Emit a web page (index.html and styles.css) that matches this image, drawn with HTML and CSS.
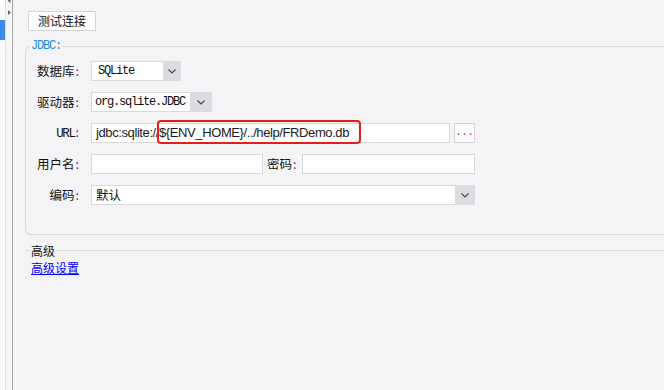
FILE: index.html
```html
<!DOCTYPE html>
<html lang="zh-CN">
<head>
<meta charset="utf-8">
<title>JDBC</title>
<link rel="stylesheet" href="styles.css">
</head>
<body>
<div class="app">
  <div class="strip">
    <div class="strip-sel"><div class="sel-block"></div></div>
    <div class="strip-sep"></div>
    <div class="strip-arrows">
      <svg class="arrows" width="6" height="16" viewBox="0 0 6 16">
        <polygon points="4.5,-2 1.5,0.5 4.5,3" fill="#666"/>
        <polygon points="2,10 5,12.5 2,15" fill="#666"/>
      </svg>
    </div>
    <div class="strip-edge"></div>
  </div>
  <div class="main">
    <button class="btn-test" type="button">测试连接</button>
    <fieldset class="group jdbc">
      <legend class="legend-jdbc">JDBC:</legend>
      <div class="rows">
        <div class="row">
          <span class="label">数据库<span class="colon">:</span></span>
          <div class="combo">
            <span class="combo-field mono w-db">SQLite</span>
            <span class="combo-btn b-db"><svg width="8" height="5" viewBox="0 0 8 5"><polyline points="0.5,0.5 4,4 7.5,0.5" fill="none" stroke="#444" stroke-width="1.1"/></svg></span>
          </div>
        </div>
        <div class="row">
          <span class="label">驱动器<span class="colon">:</span></span>
          <div class="combo">
            <span class="combo-field mono w-drv">org.sqlite.JDBC</span>
            <span class="combo-btn b-drv"><svg width="8" height="5" viewBox="0 0 8 5"><polyline points="0.5,0.5 4,4 7.5,0.5" fill="none" stroke="#444" stroke-width="1.1"/></svg></span>
          </div>
        </div>
        <div class="row">
          <span class="label"><span class="latin">URL</span><span class="colon">:</span></span>
          <div class="input url">
            <span class="url-text">jdbc:sqlite://${ENV_HOME}/../help/FRDemo.db</span>
            <span class="highlight"></span>
          </div>
          <button class="btn-dots" type="button">...</button>
        </div>
        <div class="row">
          <span class="label">用户名<span class="colon">:</span></span>
          <div class="input user"></div>
          <span class="label-inline">密码<span class="colon">:</span></span>
          <div class="input pass"></div>
        </div>
        <div class="row">
          <span class="label">编码<span class="colon">:</span></span>
          <div class="combo">
            <span class="combo-field cjk w-enc">默认</span>
            <span class="combo-btn b-enc"><svg width="8" height="5" viewBox="0 0 8 5"><polyline points="0.5,0.5 4,4 7.5,0.5" fill="none" stroke="#444" stroke-width="1.1"/></svg></span>
          </div>
        </div>
      </div>
    </fieldset>
    <fieldset class="group adv">
      <legend class="legend-adv">高级</legend>
      <a class="link" href="#">高级设置</a>
    </fieldset>
  </div>
</div>
</body>
</html>
```
FILE: styles.css
```css
html, body {
  margin: 0;
  padding: 0;
}
body {
  width: 664px;
  height: 390px;
  overflow: hidden;
  background: #f4f4f6;
  font-family: "Noto Sans CJK SC", "Noto Sans", sans-serif;
  color: #111;
}
.app {
  display: flex;
  height: 390px;
}
.strip {
  display: flex;
  flex: none;
  height: 100%;
}
.strip-sel {
  width: 5px;
  background: #fcfcfc;
  padding-top: 20px;
  box-sizing: border-box;
}
.sel-block {
  height: 20px;
  background: #3b8dea;
}
.strip-sep {
  width: 1px;
  background: #dedee0;
}
.strip-arrows {
  width: 6px;
  background: #f6f6f7;
}
.arrows {
  display: block;
}
.strip-edge {
  width: 1px;
  background: #a8a8aa;
}
.main {
  flex: 1;
  min-width: 0;
  padding: 11px 0 0 12px;
}
.btn-test {
  display: block;
  margin: 0 0 0 3px;
  width: 68px;
  height: 20px;
  padding: 0;
  background: #fff;
  border: 1px solid #d6d6d8;
  border-radius: 0;
  font-family: "Noto Sans CJK SC", sans-serif;
  font-size: 12px;
  line-height: 18px;
  color: #111;
}
.group {
  margin: 0;
  min-width: 0;
}
.jdbc {
  margin-top: 8px;
  border: 1px solid #dcdcdf;
  border-right: 0;
  border-radius: 6px 0 0 6px;
  padding: 7px 0 29px 4px;
}
.legend-jdbc {
  padding: 0 1px;
  font-family: "Liberation Mono", monospace;
  font-size: 12px;
  letter-spacing: -1.2px;
  line-height: 15px;
  color: #1a8de0;
}
.rows {
  display: flex;
  flex-direction: column;
  gap: 11px;
}
.row {
  display: flex;
  align-items: center;
  height: 20px;
}
.label {
  flex: none;
  width: 49px;
  margin-right: 12px;
  text-align: right;
  font-size: 12.5px;
  line-height: 20px;
  color: #111;
  white-space: nowrap;
}
.latin {
  font-family: "Liberation Mono", monospace;
  font-size: 12.5px;
  letter-spacing: -1.4px;
}
.label-inline {
  flex: none;
  margin: 0 5px 0 4px;
  font-size: 12.5px;
  line-height: 20px;
  white-space: nowrap;
}
.colon {
  color: #85188a;
  font-family: "Noto Sans CJK SC", sans-serif;
  font-size: 12.5px;
  letter-spacing: 0;
  padding-left: 1px;
}
.combo {
  display: flex;
  height: 20px;
}
.combo-field {
  box-sizing: border-box;
  height: 20px;
  background: #fff;
  border: 1px solid #d9d9dc;
  border-right: 0;
  white-space: nowrap;
  overflow: hidden;
}
.mono {
  font-family: "Liberation Mono", monospace;
  font-size: 12px;
  letter-spacing: -1.2px;
  line-height: 18px;
  color: #0d0d0d;
}
.cjk {
  font-size: 12.5px;
  line-height: 18px;
  padding-left: 4px;
}
.w-db {
  width: 72px;
  padding-left: 6px;
}
.w-drv {
  width: 99px;
  padding-left: 3px;
}
.w-enc {
  width: 364px;
}
.combo-btn {
  display: flex;
  align-items: center;
  justify-content: center;
  height: 20px;
  background: #dcdce0;
}
.combo-btn svg {
  display: block;
}
.b-db { width: 18px; }
.b-drv { width: 22px; }
.b-enc { width: 20px; }
.input {
  box-sizing: border-box;
  height: 20px;
  background: #fff;
  border: 1px solid #d9d9dc;
}
.url {
  position: relative;
  width: 359px;
  padding-left: 4px;
  font-family: "Liberation Sans", Arial, sans-serif;
  font-size: 13px;
  letter-spacing: -0.4px;
  line-height: 18px;
  color: #1b1b22;
  white-space: nowrap;
}
.highlight {
  position: absolute;
  left: 65px;
  top: -4px;
  width: 204px;
  height: 24px;
  box-sizing: border-box;
  border: 2px solid #e61e1a;
  border-radius: 4px;
}
.btn-dots {
  flex: none;
  margin-left: 4px;
  width: 21px;
  height: 20px;
  padding: 0;
  background: #fbfbfb;
  border: 1px solid #d6d6d8;
  border-radius: 0;
  font-family: "Liberation Mono", monospace;
  font-size: 10px;
  letter-spacing: 0;
  line-height: 18px;
  text-align: center;
  color: #85188a;
}
.user {
  width: 172px;
}
.pass {
  width: 173px;
}
.adv {
  margin-top: 8px;
  border: 0;
  border-top: 1px solid #e0e0e3;
  padding: 2px 0 0 6px;
  font-size: 12px;
  line-height: 16px;
}
.legend-adv {
  padding: 0 1px;
  margin-left: -1px;
  font-size: 12px;
  line-height: 15px;
  color: #111;
}
.link {
  display: block;
  width: max-content;
  font-size: 12px;
  line-height: 16px;
  color: #0000ff;
  text-decoration: underline;
}
```
